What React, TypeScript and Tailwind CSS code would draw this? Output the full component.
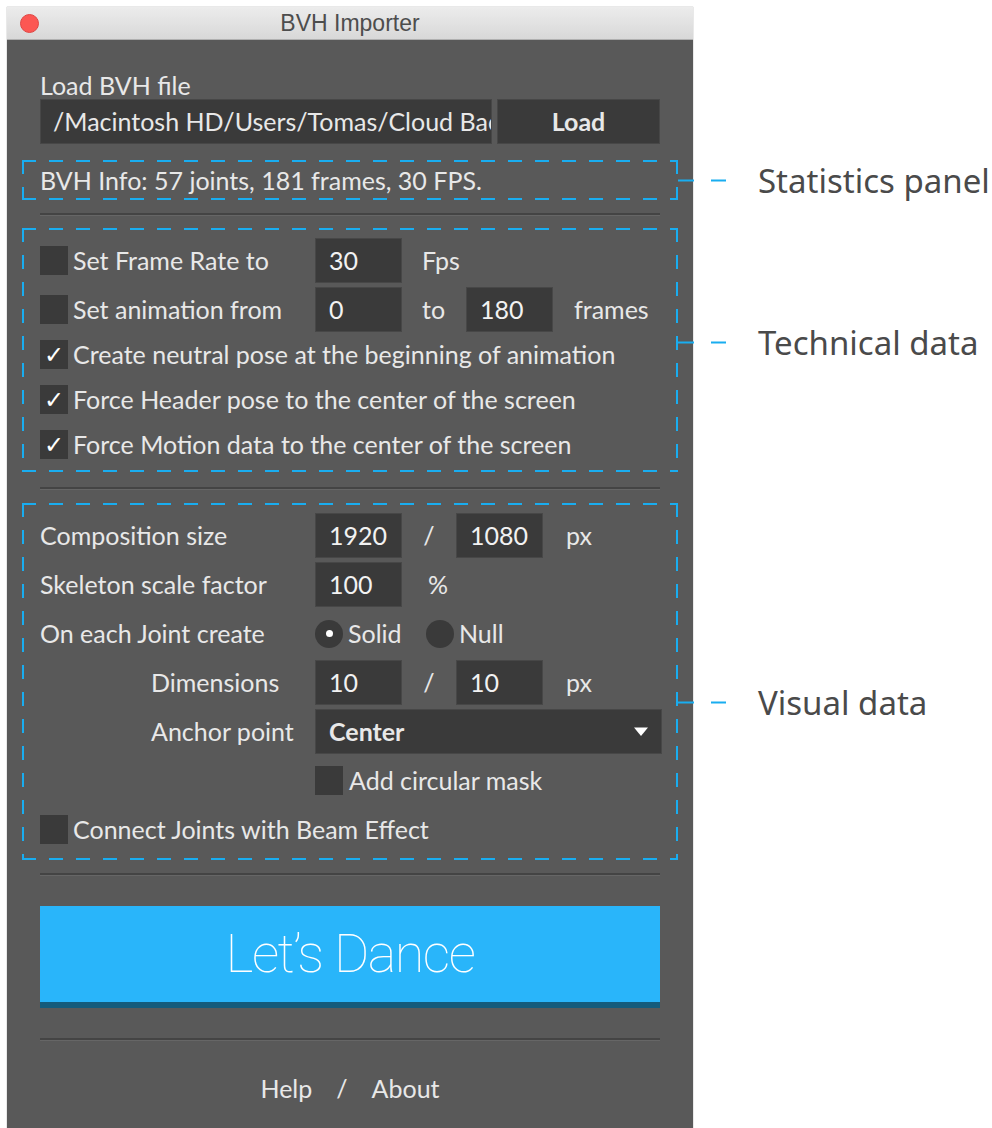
import type { ReactNode } from 'react'

// dashed callout frame, drawn as four gradient edges over the section
function DashedFrame() {
  return (
    <>
      <span className="absolute left-0 right-0 top-0 h-[2px] bg-[image:repeating-linear-gradient(90deg,#19adf0_0_14px,transparent_14px_27px)]" />
      <span className="absolute left-0 right-0 bottom-0 h-[2px] bg-[image:repeating-linear-gradient(90deg,#19adf0_0_14px,transparent_14px_27px)]" />
      <span className="absolute top-0 bottom-0 left-0 w-[2px] bg-[image:repeating-linear-gradient(180deg,#19adf0_0_14px,transparent_14px_27px)]" />
      <span className="absolute top-0 bottom-0 right-0 w-[2px] bg-[image:repeating-linear-gradient(180deg,#19adf0_0_14px,transparent_14px_27px)]" />
    </>
  )
}

function Callout({ text, className }: { text: string; className: string }) {
  return (
    <div className={'absolute left-full -translate-y-1/2 flex items-center ' + className}>
      <span className="w-[16px] h-[2px] bg-[#19adf0]" />
      <span className="ml-[17px] w-[15px] h-[2px] bg-[#19adf0]" />
      <span className="ml-[32px] whitespace-nowrap text-[33px] leading-none text-[#4a4a4a] font-['Noto_Sans',sans-serif]">
        {text}
      </span>
    </div>
  )
}

function Divider({ className }: { className: string }) {
  return (
    <div className={'mx-[18px] ' + className}>
      <div className="h-[2px] bg-[#444444]" />
      <div className="h-[1px] bg-[#666666]" />
    </div>
  )
}

function Field({ value, className }: { value: string; className?: string }) {
  return (
    <div className={'h-[45px] flex items-center pl-[13px] bg-[#3a3a3a] border border-[#474747] text-[#f2f2f2] ' + (className || 'w-[87px]')}>
      {value}
    </div>
  )
}

function Check({ on }: { on?: boolean }) {
  return (
    <span className="w-[28px] h-[29px] shrink-0 bg-[#3a3a3a] flex items-center justify-center text-white text-[24px] leading-none font-['DejaVu_Sans',sans-serif]">
      {on ? '✓' : ''}
    </span>
  )
}

function Radio({ on }: { on?: boolean }) {
  return (
    <span className="w-[28px] h-[28px] rounded-full bg-[#3a3a3a] flex items-center justify-center">
      {on && <span className="w-[7px] h-[7px] rounded-full bg-white" />}
    </span>
  )
}

function Row({ children, className }: { children: ReactNode; className?: string }) {
  return <div className={'h-[45px] flex items-center ' + (className || '')}>{children}</div>
}

export default function App() {
  return (
    <div className="min-h-screen bg-white pt-[7px] pl-[7px] font-[Lato,sans-serif] text-[25px] leading-none text-[#e8e8e8]">
      <div className="w-[686px] bg-[#595959] shadow-[0_0_1px_rgba(0,0,0,0.5)]">
        {/* title bar */}
        <div className="relative h-[33px] flex items-center justify-center bg-[linear-gradient(#ececec,#d8d8d8)] border-b border-[#b0b0b0]">
          <span className="absolute left-[13px] top-[7px] w-[19px] h-[19px] rounded-full bg-[#fc5753] border border-[#df4744]" />
          <span className="text-[23px] text-[#4d4d4d] font-['Liberation_Sans',sans-serif]">BVH Importer</span>
        </div>

        <div className="px-[15px] pt-[33px] pb-[28px]">
          <div className="px-[18px]">
            <div className="h-[24px] flex items-center">Load BVH file</div>
            <div className="mt-[2px] flex gap-[5px]">
              <div className="flex-1 h-[45px] flex items-center pl-[12px] bg-[#3a3a3a] border border-[#474747] overflow-hidden whitespace-nowrap">
                /Macintosh HD/Users/Tomas/Cloud Bac
              </div>
              <div className="w-[163px] h-[45px] flex items-center justify-center bg-[#3a3a3a] border border-[#474747] font-bold">
                Load
              </div>
            </div>
          </div>

          {/* statistics */}
          <div className="relative mt-[16px] h-[40px] flex items-center px-[18px]">
            <DashedFrame />
            <span>BVH Info: 57 joints, 181 frames, 30 FPS.</span>
            <Callout text="Statistics panel" className="top-[20px]" />
          </div>

          <Divider className="mt-[13px]" />

          {/* technical */}
          <div className="relative mt-[12px] pl-[18px] pr-[16px] pt-[10px] pb-[5px]">
            <DashedFrame />
            <Row>
              <Check />
              <span className="ml-[5px] w-[242px]">Set Frame Rate to</span>
              <Field value="30" />
              <span className="ml-[20px]">Fps</span>
            </Row>
            <Row className="mt-[4px]">
              <Check />
              <span className="ml-[5px] w-[242px]">Set animation from</span>
              <Field value="0" />
              <span className="ml-[20px] w-[44px]">to</span>
              <Field value="180" />
              <span className="ml-[21px]">frames</span>
            </Row>
            <Row>
              <Check on />
              <span className="ml-[5px]">Create neutral pose at the beginning of animation</span>
            </Row>
            <Row>
              <Check on />
              <span className="ml-[5px]">Force Header pose to the center of the screen</span>
            </Row>
            <Row>
              <Check on />
              <span className="ml-[5px]">Force Motion data to the center of the screen</span>
            </Row>
            <Callout text="Technical data" className="top-[114px]" />
          </div>

          <Divider className="mt-[15px]" />

          {/* visual */}
          <div className="relative mt-[13px] pl-[18px] pr-[16px] pt-[10px] pb-[8px] flex flex-col gap-[4px]">
            <DashedFrame />
            <Row>
              <span className="w-[275px]">Composition size</span>
              <Field value="1920" />
              <span className="w-[54px] text-center">/</span>
              <Field value="1080" />
              <span className="ml-[23px]">px</span>
            </Row>
            <Row>
              <span className="w-[275px]">Skeleton scale factor</span>
              <Field value="100" />
              <span className="ml-[26px]">%</span>
            </Row>
            <Row>
              <span className="w-[275px]">On each Joint create</span>
              <Radio on />
              <span className="ml-[5px] w-[78px]">Solid</span>
              <Radio />
              <span className="ml-[5px]">Null</span>
            </Row>
            <Row>
              <span className="ml-[111px] w-[164px]">Dimensions</span>
              <Field value="10" />
              <span className="w-[54px] text-center">/</span>
              <Field value="10" />
              <span className="ml-[23px]">px</span>
            </Row>
            <Row>
              <span className="ml-[111px] w-[164px]">Anchor point</span>
              <div className="flex-1 h-[45px] flex items-center justify-between pl-[13px] pr-[12px] bg-[#3a3a3a] border border-[#474747] font-bold">
                <span>Center</span>
                <svg width="16" height="11" viewBox="0 0 16 11">
                  <path d="M1 1.5 L15 1.5 L8 10 Z" fill="#ffffff" />
                </svg>
              </div>
            </Row>
            <Row>
              <span className="w-[275px]" />
              <Check />
              <span className="ml-[6px]">Add circular mask</span>
            </Row>
            <Row>
              <Check />
              <span className="ml-[5px]">Connect Joints with Beam Effect</span>
            </Row>
            <Callout text="Visual data" className="top-[199px]" />
          </div>

          <Divider className="mt-[13px]" />

          <div className="mx-[18px] mt-[30px]">
            <button className="w-full h-[102px] flex items-center justify-center bg-[#29b5fa] border-b-[6px] border-[#145b7b] text-white text-[54px] font-thin tracking-[-1.5px] font-[Roboto,sans-serif]">
              Let’s Dance
            </button>
          </div>

          <Divider className="mt-[30px]" />

          <div className="mt-[35px] flex items-center justify-center gap-[24px]">
            <span>Help</span>
            <span>/</span>
            <span>About</span>
          </div>
        </div>
      </div>
    </div>
  )
}
